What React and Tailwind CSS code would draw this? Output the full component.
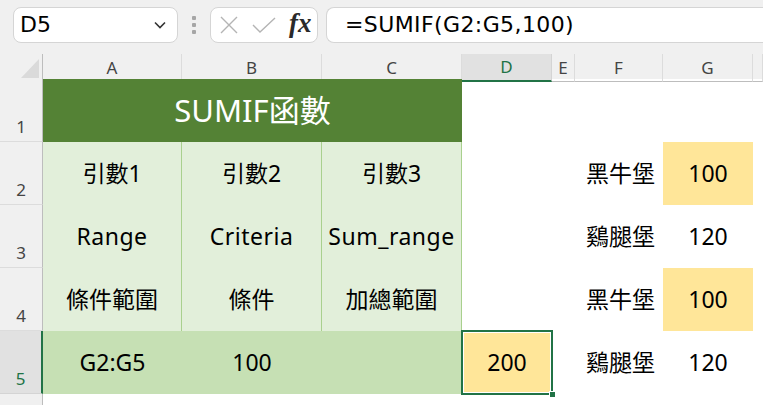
import React from 'react';

const COLS = ['A', 'B', 'C', 'D', 'E', 'F', 'G', ''];
const cellFont = { fontFamily: '"Noto Sans", "Noto Sans CJK TC", sans-serif' };

const RowHead = ({ n, active }) => (
    <div
        className={
            active
                ? 'h-[63px] bg-[#e1e1e1] border-r-2 border-r-[#217346] border-b border-b-[#d4d4d4] flex items-end justify-center pb-[2px] text-[17px] text-[#217346]'
                : 'h-[63px] bg-[#f0f0f0] border-r border-r-[#bdbdbd] border-b border-b-[#dcdcdc] flex items-end justify-center pb-[2px] text-[17px] text-[#444]'
        }
    >
        {n}
    </div>
);

const Cell = ({ children, className = '' }) => (
    <div className={'h-[63px] flex items-center text-[23px] text-black ' + className}>{children}</div>
);

const App = () => {
    return (
        <div className="w-[763px] h-[405px] overflow-hidden bg-white" style={{ fontFamily: '"Noto Sans", sans-serif' }}>
            {/* toolbar */}
            <div className="h-[54px] bg-[#f0f0f0] flex items-start pt-[7px] pl-[13px]">
                <div className="w-[165px] h-[36px] bg-white border border-[#d5d5d5] rounded-lg flex items-center justify-between pl-[6px] pr-[10px]">
                    <span className="text-[22px] text-black leading-none" style={{ fontFamily: '"DejaVu Sans", sans-serif' }}>
                        D5
                    </span>
                    <svg width="14" height="10" viewBox="0 0 14 10">
                        <path d="M2 2.5 L7 7.5 L12 2.5" fill="none" stroke="#333" strokeWidth="1.6" />
                    </svg>
                </div>
                <div className="w-[32px] h-[36px] flex flex-col items-center justify-center gap-[3px]">
                    <span className="w-[4px] h-[4px] rounded-[1px] bg-[#a6a6a6]" />
                    <span className="w-[4px] h-[4px] rounded-[1px] bg-[#a6a6a6]" />
                    <span className="w-[4px] h-[4px] rounded-[1px] bg-[#a6a6a6]" />
                </div>
                <div className="w-[108px] h-[36px] bg-white border border-[#d5d5d5] rounded-lg flex items-center pl-[8px] gap-[12px]">
                    <svg width="20" height="20" viewBox="0 0 20 20">
                        <path d="M2 2 L18 18 M18 2 L2 18" stroke="#b4b4b4" strokeWidth="1.4" fill="none" />
                    </svg>
                    <svg width="26" height="18" viewBox="0 0 26 18">
                        <path d="M2 9 L9 16 L24 2" stroke="#b4b4b4" strokeWidth="1.4" fill="none" />
                    </svg>
                    <span className="text-[27px] italic font-bold text-[#2a2a2a] leading-none -mt-[4px]" style={{ fontFamily: '"Liberation Serif", serif' }}>
                        fx
                    </span>
                </div>
                <div className="ml-[8px] flex-1 h-[36px] bg-white border border-[#d5d5d5] border-r-0 rounded-l-lg flex items-center pl-[18px]">
                    <span className="text-[22px] text-black leading-none tracking-[0.4px]" style={{ fontFamily: '"DejaVu Sans", sans-serif' }}>
                        =SUMIF(G2:G5,100)
                    </span>
                </div>
            </div>

            {/* column headers */}
            <div className="grid grid-cols-[43px_139px_140px_140px_90px_23px_88px_90px_1fr] h-[25px] bg-[#f0f0f0]">
                <div className="border-r border-r-[#bdbdbd] border-b border-b-[#bdbdbd] flex items-end justify-end pr-[3px] pb-[3px]">
                    <svg width="18" height="19" viewBox="0 0 18 19">
                        <path d="M18 0 L18 19 L0 19 Z" fill="#dadada" />
                    </svg>
                </div>
                {COLS.map((c) =>
                    c === 'D' ? (
                        <div key={c} className="bg-[#e1e1e1] border-b-2 border-b-[#217346] border-r border-r-[#d4d4d4] flex items-center justify-center text-[17px] text-[#217346]">
                            {c}
                        </div>
                    ) : (
                        <div key={c || 'x'} className="border-b border-b-[#bdbdbd] border-r border-r-[#dcdcdc] flex items-center justify-center text-[17px] text-[#444]">
                            {c}
                        </div>
                    )
                )}
            </div>

            {/* sheet body */}
            <div className="grid grid-cols-[43px_139px_140px_140px_90px_23px_88px_90px_1fr]" style={cellFont}>
                {/* row 1 */}
                <RowHead n="1" />
                <Cell className="col-span-3 bg-[#548235] justify-center text-white text-[31px]">SUMIF函數</Cell>
                <Cell />
                <Cell />
                <Cell />
                <Cell />
                <Cell />

                {/* row 2 */}
                <RowHead n="2" />
                <Cell className="bg-[#e2efda] border-r border-r-[#a9d08e] justify-center">引數1</Cell>
                <Cell className="bg-[#e2efda] border-r border-r-[#a9d08e] justify-center">引數2</Cell>
                <Cell className="bg-[#e2efda] border-r border-r-[#a9d08e] justify-center">引數3</Cell>
                <Cell />
                <Cell />
                <Cell className="justify-end pr-[8px]">黑牛堡</Cell>
                <Cell className="bg-[#ffe699] justify-center">100</Cell>
                <Cell />

                {/* row 3 */}
                <RowHead n="3" />
                <Cell className="bg-[#e2efda] border-r border-r-[#a9d08e] justify-center tracking-[0.5px]">Range</Cell>
                <Cell className="bg-[#e2efda] border-r border-r-[#a9d08e] justify-center tracking-[0.5px]">Criteria</Cell>
                <Cell className="bg-[#e2efda] border-r border-r-[#a9d08e] justify-center tracking-[0.5px]">Sum_range</Cell>
                <Cell />
                <Cell />
                <Cell className="justify-end pr-[8px]">鷄腿堡</Cell>
                <Cell className="justify-center">120</Cell>
                <Cell />

                {/* row 4 */}
                <RowHead n="4" />
                <Cell className="bg-[#e2efda] border-r border-r-[#a9d08e] justify-center">條件範圍</Cell>
                <Cell className="bg-[#e2efda] border-r border-r-[#a9d08e] justify-center">條件</Cell>
                <Cell className="bg-[#e2efda] border-r border-r-[#a9d08e] justify-center">加總範圍</Cell>
                <Cell />
                <Cell />
                <Cell className="justify-end pr-[8px]">黑牛堡</Cell>
                <Cell className="bg-[#ffe699] justify-center">100</Cell>
                <Cell />

                {/* row 5 */}
                <RowHead n="5" active />
                <Cell className="bg-[#c6e0b4] justify-center">G2:G5</Cell>
                <Cell className="bg-[#c6e0b4] justify-center">100</Cell>
                <Cell className="bg-[#c6e0b4]" />
                <Cell className="relative bg-[#ffe699] justify-center">
                    200
                    <div className="absolute -left-[1px] -top-[1px] -right-[1px] -bottom-[1px] border-2 border-[#217346] pointer-events-none">
                        <div className="absolute inset-0 border border-white" />
                    </div>
                    <div className="absolute -right-[4px] -bottom-[4px] w-[7px] h-[7px] bg-[#217346] border border-white" />
                </Cell>
                <Cell />
                <Cell className="justify-end pr-[8px]">鷄腿堡</Cell>
                <Cell className="justify-center">120</Cell>
                <Cell />

                {/* row 6 */}
                <RowHead n="" />
            </div>
        </div>
    );
};

export default App;
